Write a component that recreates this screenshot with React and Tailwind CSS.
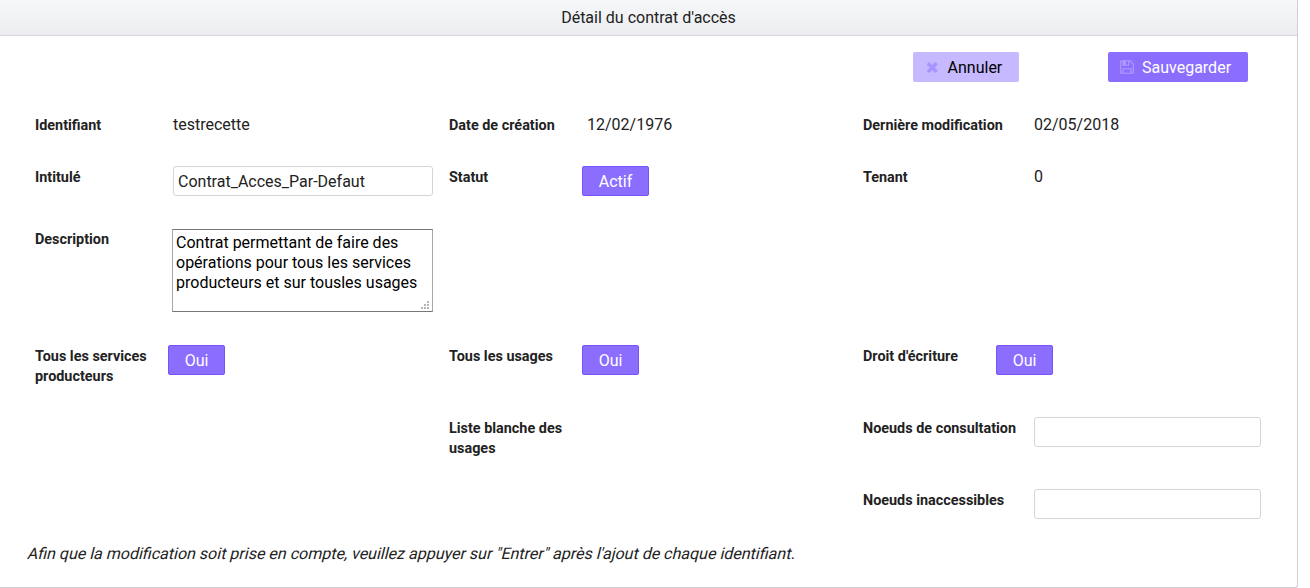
function Label({ children, width = "w-[138px]", offset = "pt-[2px]" }) {
  return <div className={`${width} ${offset} shrink-0 pr-4 text-[14.4px] font-bold leading-5`}>{children}</div>;
}

function Value({ children }) {
  return <div className="text-[16px] leading-5">{children}</div>;
}

function Toggle({ children, width = "w-[57px]" }) {
  return (
    <button className={`${width} -ml-[5px] h-[30px] rounded-[2px] border border-[#7554fd] bg-[#8c6eff] pt-px text-[16px] leading-5 text-white`}>
      {children}
    </button>
  );
}

function Field({ className = "", ...props }) {
  return (
    <input
      className={`${className} block h-[30px] rounded-[3px] border border-[#d5d5d5] bg-white pl-1 pt-px text-[16px] outline-none`}
      {...props}
    />
  );
}

function CloseIcon() {
  return (
    <svg className="h-4 w-[12.57px]" viewBox="0 0 1408 1792" fill="currentColor">
      <path d="M1298 1322q0 40-28 68l-136 136q-28 28-68 28t-68-28l-294-294-294 294q-28 28-68 28t-68-28l-136-136q-28-28-28-68t28-68l294-294-294-294q-28-28-28-68t28-68l136-136q28-28 68-28t68 28l294 294 294-294q28-28 68-28t68 28l136 136q28 28 28 68t-28 68l-294 294 294 294q28 28 28 68z" />
    </svg>
  );
}

function SaveIcon() {
  return (
    <svg className="h-4 w-[14px]" viewBox="0 0 1536 1792" fill="currentColor">
      <path d="M384 1536h768v-384h-768v384zM1280 1536h128v-896q0-14-10-38.500t-20-34.500l-281-281q-10-10-34-20t-39-10v416q0 40-28 68t-68 28h-576q-40 0-68-28t-28-68v-416h-128v1280h128v-416q0-40 28-68t68-28h832q40 0 68 28t28 68v416zM896 608v-320q0-13-9.500-22.500t-22.500-9.500h-192q-13 0-22.500 9.500t-9.500 22.500v320q0 13 9.500 22.500t22.500 9.500h192q13 0 22.500-9.500t9.500-22.500zM1536 640v928q0 40-28 68t-68 28h-1344q-40 0-68-28t-28-68v-1344q0-40 28-68t68-28h928q40 0 88 20t76 48l280 280q28 28 48 76t20 88z" />
    </svg>
  );
}

function Grip() {
  return (
    <svg className="pointer-events-none absolute bottom-[2px] right-[3px] h-[9px] w-[9px]" viewBox="0 0 9 9" fill="#b5b5b5" shapeRendering="crispEdges">
      <path d="M6 0h2v2h-2zM3 3h2v2h-2zM6 3h2v2h-2zM0 6h2v2h-2zM3 6h2v2h-2zM6 6h2v2h-2z" />
    </svg>
  );
}

export default function App() {
  return (
    <div className="h-[588px] bg-white font-['Roboto',sans-serif] text-[#222222]">
      <div className="flex h-[588px] w-[1298px] flex-col rounded-br-[3px] border-b border-r border-[#d0d0d3]">
        <header className="h-9 shrink-0 border-b border-[#d5d5d5] bg-linear-to-b from-[#f6f7f9] to-[#ebedf0] text-center text-[16px] leading-[35px]">
          Détail du contrat d'accès
        </header>

        <div className="flex h-[79px] shrink-0 justify-end gap-[89px] pr-[49px] pt-4">
          <button className="flex h-[30px] w-[106px] items-center rounded-[2px] bg-[#c6b9ff] pl-[13px] text-[16px] text-black">
            <span className="mr-[9px] text-[#a893ff]"><CloseIcon /></span>
            <span className="pt-px">Annuler</span>
          </button>
          <button className="flex h-[30px] w-[140px] items-center rounded-[2px] bg-[#8c6eff] pl-3 text-[16px] text-white">
            <span className="mr-2 text-[#b09cff]"><SaveIcon /></span>
            <span className="pt-px">Sauvegarder</span>
          </button>
        </div>

        <main className="grid grid-cols-[414px_414px_414px] grid-rows-[51px_63px_116px_72px_72px_55px] pl-[35px]">
          <div className="flex"><Label offset="pt-px">Identifiant</Label><Value>testrecette</Value></div>
          <div className="flex"><Label offset="pt-px">Date de création</Label><Value>12/02/1976</Value></div>
          <div className="flex"><Label width="w-[171px]" offset="pt-px">Dernière modification</Label><Value>02/05/2018</Value></div>

          <div className="flex"><Label>Intitulé</Label><Field className="w-[260px]" defaultValue="Contrat_Acces_Par-Defaut" /></div>
          <div className="flex"><Label>Statut</Label><Toggle width="w-[67px]">Actif</Toggle></div>
          <div className="flex"><Label width="w-[171px]">Tenant</Label><div className="pt-px"><Value>0</Value></div></div>

          <div className="flex">
            <Label offset="pt-px">Description</Label>
            <div className="relative -ml-px h-[83px] w-[261px]">
              <textarea
                className="block h-full w-full resize-none overflow-hidden border border-x-[#a9a9a9] border-y-[#767676] bg-white px-[3px] py-[3px] text-[16px] leading-5 text-black outline-none"
                spellCheck="false"
                defaultValue={"Contrat permettant de faire des opérations pour tous les services producteurs et sur tousles usages"}
              />
              <Grip />
            </div>
          </div>
          <div />
          <div />

          <div className="flex"><Label>Tous les services producteurs</Label><Toggle>Oui</Toggle></div>
          <div className="flex"><Label>Tous les usages</Label><Toggle>Oui</Toggle></div>
          <div className="flex"><Label>Droit d'écriture</Label><Toggle>Oui</Toggle></div>

          <div />
          <div className="flex"><Label>Liste blanche des usages</Label></div>
          <div className="flex"><Label width="w-[171px]">Noeuds de consultation</Label><Field className="w-[227px]" /></div>

          <div />
          <div />
          <div className="flex"><Label width="w-[171px]">Noeuds inaccessibles</Label><Field className="w-[227px]" /></div>
        </main>

        <p className="ml-7 w-fit -skew-x-14 text-[16px] leading-5">
          Afin que la modification soit prise en compte, veuillez appuyer sur "Entrer" après l'ajout de chaque identifiant.
        </p>
      </div>
    </div>
  );
}
